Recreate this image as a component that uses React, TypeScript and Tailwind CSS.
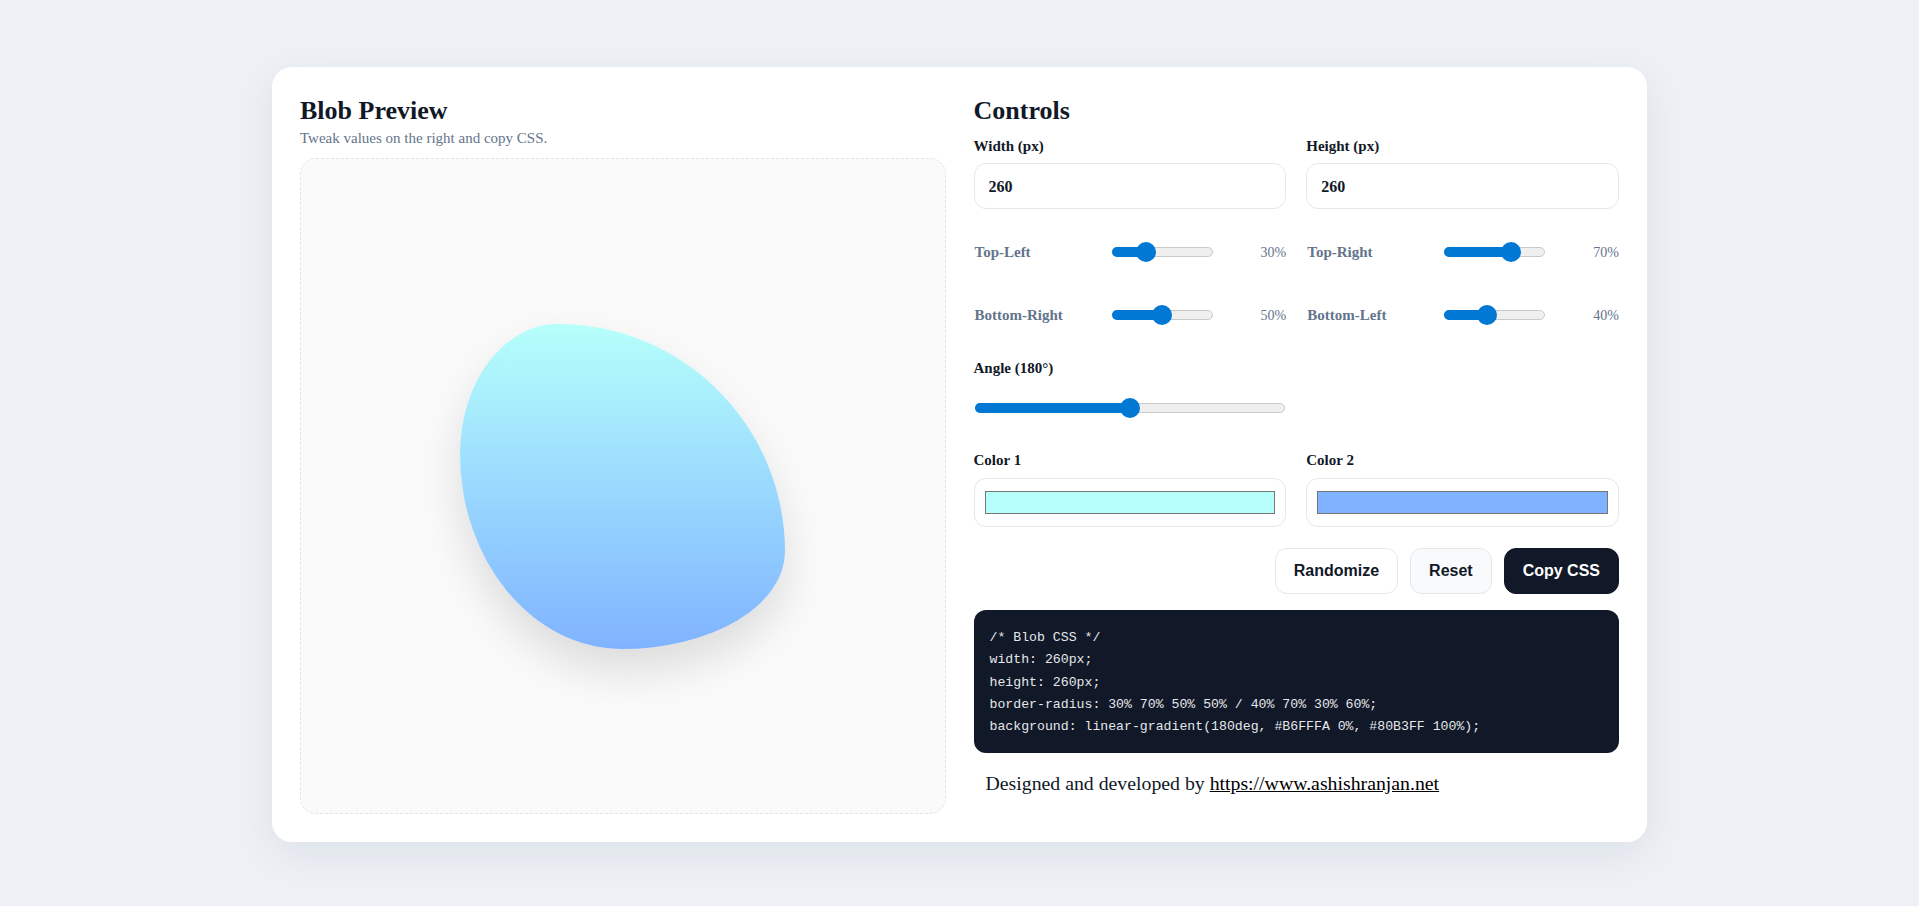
const serif = { fontFamily: '"Liberation Serif", "Times New Roman", serif' };

function Range({ value, min, max, width }: { value: number; min: number; max: number; width: number }) {
  const pct = (value - min) / (max - min);
  const thumbLeft = pct * (width - 20);
  return (
    <div className="relative flex h-5 shrink-0 items-center" style={{ width }}>
      <div className="relative h-[10px] w-full rounded-full border border-[#c9c9c9] bg-[#efefef]">
        <div
          className="absolute -top-px -bottom-px -left-px rounded-full bg-[#0078d4]"
          style={{ width: thumbLeft + 11 }}
        />
      </div>
      <div
        className="absolute top-0 size-5 rounded-full bg-[#0078d4]"
        style={{ left: thumbLeft }}
      />
    </div>
  );
}

function CornerRow({ label, value }: { label: string; value: number }) {
  return (
    <div className="flex h-10 items-center">
      <span className="w-[138px] shrink-0 pl-px text-[15px] font-bold text-[#64748b]">{label}</span>
      <Range value={value} min={0} max={100} width={101} />
      <span className="flex-1 text-right text-[14px] text-[#64748b]">{value}%</span>
    </div>
  );
}

function Swatch({ color }: { color: string }) {
  return (
    <div className="h-[49px] rounded-xl border border-[#e5e7eb] bg-white px-2.5 py-3">
      <div className="h-[23px] w-full border border-[#767676]" style={{ background: color }} />
    </div>
  );
}

const css = `/* Blob CSS */
width: 260px;
height: 260px;
border-radius: 30% 70% 50% 50% / 40% 70% 30% 60%;
background: linear-gradient(180deg, #B6FFFA 0%, #80B3FF 100%);`;

export default function App() {
  return (
    <main className="flex min-h-screen items-center justify-center bg-[#edf1f6] pt-[3px]" style={serif}>
      <div className="grid w-[1375px] grid-cols-2 gap-7 rounded-[20px] bg-white p-7 shadow-[0_12px_40px_rgba(15,23,42,0.07)]">
        {/* preview */}
        <section className="flex flex-col">
          <h2 className="text-[26px] font-bold leading-8 text-[#111827]">Blob Preview</h2>
          <p className="mt-px text-[15px] leading-5 text-[#64748b]">Tweak values on the right and copy CSS.</p>
          <div className="mt-2.5 flex h-[656px] items-center justify-center rounded-2xl border border-dashed border-[#e3e5e8] bg-[#fafafa]">
            <div className="size-[325px] rounded-[30%_70%_50%_50%/40%_70%_30%_60%] bg-gradient-to-b from-[#B6FFFA] to-[#80B3FF] shadow-[0_22px_45px_rgba(0,0,0,0.12)]" />
          </div>
        </section>

        {/* controls */}
        <section className="flex flex-col">
          <h2 className="text-[26px] font-bold leading-8 text-[#111827]">Controls</h2>

          <div className="mt-[9px] grid grid-cols-2 gap-x-5">
            {["Width (px)", "Height (px)"].map((l) => (
              <label key={l} className="flex flex-col">
                <span className="text-[15px] font-bold leading-5 text-[#111827]">{l}</span>
                <input
                  type="text"
                  defaultValue="260"
                  className="mt-[7px] h-[46px] rounded-xl border border-[#e5e7eb] bg-white px-[14px] pt-0.5 text-[16px] font-bold text-[#111827] outline-none"
                  style={serif}
                />
              </label>
            ))}
          </div>

          <div className="mt-[23px] grid grid-cols-2 gap-x-5 gap-y-[23px]">
            <CornerRow label="Top-Left" value={30} />
            <CornerRow label="Top-Right" value={70} />
            <CornerRow label="Bottom-Right" value={50} />
            <CornerRow label="Bottom-Left" value={40} />
          </div>

          <div className="mt-[23px] grid grid-cols-2 gap-x-5">
            <div className="flex flex-col">
              <span className="text-[15px] font-bold leading-5 text-[#111827]">Angle (180°)</span>
              <div className="mt-5 pl-px">
                <Range value={180} min={0} max={360} width={310} />
              </div>
            </div>
          </div>

          <div className="mt-8 grid grid-cols-2 gap-x-5">
            <div className="flex flex-col gap-2">
              <span className="text-[15px] font-bold leading-5 text-[#111827]">Color 1</span>
              <Swatch color="#B6FFFA" />
            </div>
            <div className="flex flex-col gap-2">
              <span className="text-[15px] font-bold leading-5 text-[#111827]">Color 2</span>
              <Swatch color="#80B3FF" />
            </div>
          </div>

          <div
            className="mt-[21px] flex justify-end gap-3 text-[16px] font-bold"
            style={{ fontFamily: '"Liberation Sans", Arial, sans-serif' }}
          >
            <button className="h-[46px] rounded-xl border border-[#e5e7eb] bg-white px-[18px] text-[#111827]">Randomize</button>
            <button className="h-[46px] rounded-xl border border-[#e5e7eb] bg-[#f8fafc] px-[18px] text-[#111827]">Reset</button>
            <button className="h-[46px] rounded-xl border border-[#111827] bg-[#111827] px-[18px] text-white">Copy CSS</button>
          </div>

          <pre
            className="mt-4 rounded-xl bg-[#111827] px-4 pt-[17px] pb-[15px] text-[13.2px] leading-[22.3px] text-[#e5e7eb]"
            style={{ fontFamily: '"Liberation Mono", "DejaVu Sans Mono", monospace' }}
          >
            {css}
          </pre>

          <p className="mt-4 px-3 text-[19.8px] text-[#111827]">
            Designed and developed by{" "}
            <a href="#" className="text-black underline">
              https://www.ashishranjan.net
            </a>
          </p>
        </section>
      </div>
    </main>
  );
}
